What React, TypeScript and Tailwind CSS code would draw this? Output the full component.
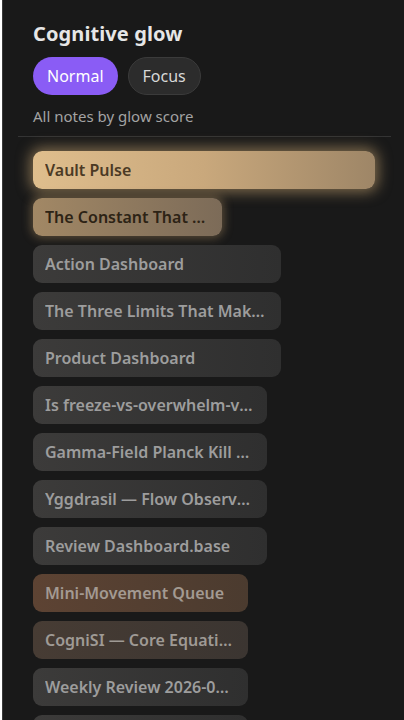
import React from 'react';

type Note = {
  title: string;
  score: number;
  tone: 'hot' | 'warm' | 'amber' | 'dusk' | 'plain';
};

const notes: Note[] = [
  { title: 'Vault Pulse', score: 1, tone: 'hot' },
  { title: 'The Constant That Makes Everything Work', score: 0.553, tone: 'warm' },
  { title: 'Action Dashboard', score: 0.725, tone: 'plain' },
  { title: 'The Three Limits That Make a System', score: 0.725, tone: 'plain' },
  { title: 'Product Dashboard', score: 0.725, tone: 'plain' },
  { title: 'Is freeze-vs-overwhelm-vs-shutdown', score: 0.684, tone: 'plain' },
  { title: 'Gamma-Field Planck Kill Switch', score: 0.684, tone: 'plain' },
  { title: 'Yggdrasil — Flow Observatory', score: 0.684, tone: 'plain' },
  { title: 'Review Dashboard.base', score: 0.684, tone: 'plain' },
  { title: 'Mini-Movement Queue', score: 0.629, tone: 'amber' },
  { title: 'CogniSI — Core Equations', score: 0.629, tone: 'dusk' },
  { title: 'Weekly Review 2026-01-12', score: 0.629, tone: 'plain' },
  { title: 'Daily Note', score: 0.629, tone: 'plain' },
];

const toneClass: Record<Note['tone'], string> = {
  hot: 'bg-gradient-to-r from-[#dfbe8d] via-[#c9a87c] to-[#9e8667] text-[#4b3a25] shadow-[0_0_14px_3px_rgba(214,176,120,0.55)]',
  warm: 'bg-gradient-to-r from-[#a28865] to-[#7c6b58] text-[#2d2315] shadow-[0_0_10px_2px_rgba(190,155,105,0.4)]',
  amber: 'bg-gradient-to-r from-[#5d4333] to-[#4b3b2f] text-[#a39a92]',
  dusk: 'bg-gradient-to-r from-[#473c34] to-[#3b3531] text-[#9f9a95]',
  plain: 'bg-gradient-to-r from-[#3c3b3a] to-[#2f2f2f] text-[#9d9d9d]',
};

const MAX_W = 342;

export default function App() {
  return (
    <div
      className="h-[720px] overflow-hidden bg-[#191919] border-l border-[#3a3a3a] ml-[2px]"
      style={{ fontFamily: '"Noto Sans", "Open Sans", sans-serif' }}
    >
      <div className="px-[15px] pt-[20px]">
        <div className="px-[15px]">
          <h1 className="text-[20px] font-bold text-[#e6e6e6] leading-[28px] tracking-[0.1px]">Cognitive glow</h1>
          <div className="flex gap-[10px] mt-[9px]">
            <button className="h-[38px] px-[14px] rounded-full bg-[#8a5cf5] text-white text-[16px]">
              Normal
            </button>
            <button className="h-[38px] px-[14px] rounded-full bg-[#2c2c2c] border border-[#3b3b3b] text-[#d8d8d8] text-[16px]">
              Focus
            </button>
          </div>
          <p className="mt-[11px] text-[15px] text-[#a3a3a3] leading-[20px]">All notes by glow score</p>
        </div>
        <div className="mt-[10px] h-px bg-[#343434] mr-[-2px]" />
        <div className="flex flex-col gap-[9px] pt-[14px] px-[15px]">
          {notes.map((n) => (
            <div
              key={n.title}
              className={`h-[38px] shrink-0 rounded-[9px] px-[12px] flex items-center text-[16px] font-semibold ${toneClass[n.tone]}`}
              style={{ width: Math.round(MAX_W * n.score) }}
            >
              <span className="truncate">{n.title}</span>
            </div>
          ))}
        </div>
      </div>
    </div>
  );
}
